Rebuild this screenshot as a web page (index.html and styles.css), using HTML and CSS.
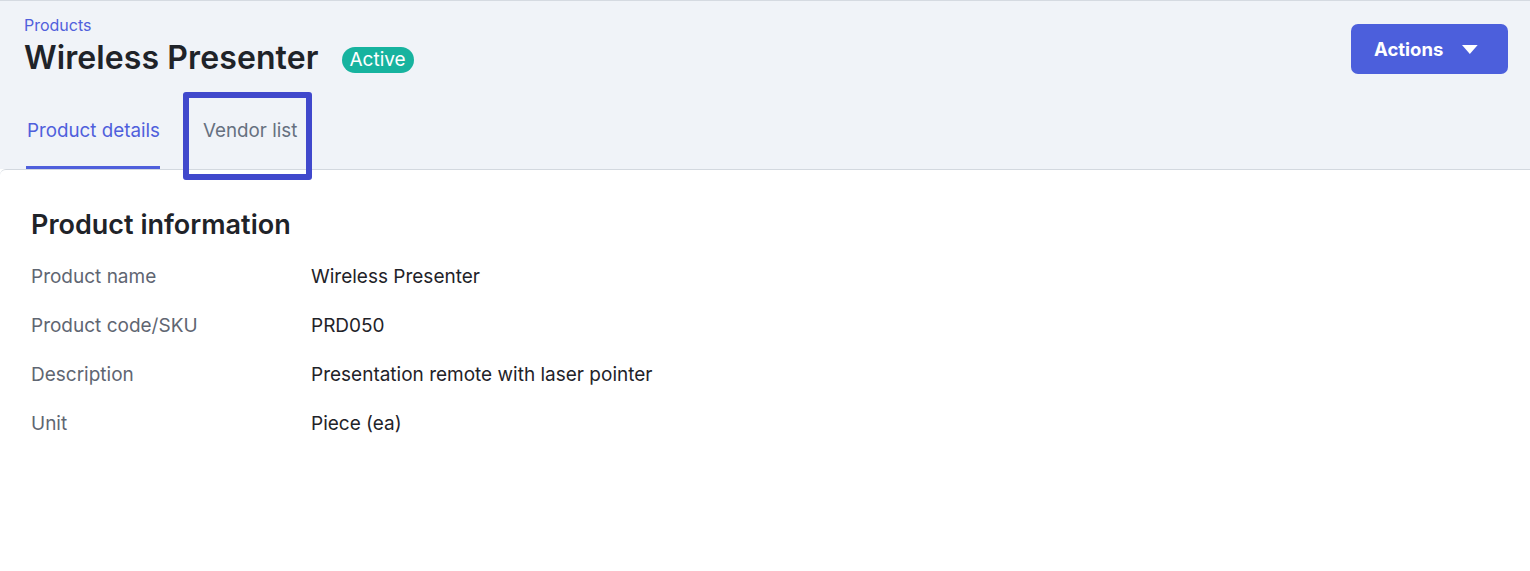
FILE: index.html
```html
<!DOCTYPE html>
<html lang="en">
<head>
<meta charset="utf-8">
<title>Wireless Presenter</title>
<link rel="stylesheet" href="styles.css">
</head>
<body>
<header class="header">
  <div class="header-top">
    <div class="title-block">
      <a class="crumb">Products</a>
      <div class="title-row">
        <h1 class="title">Wireless Presenter</h1>
        <span class="badge">Active</span>
      </div>
    </div>
    <button class="actions">
      <span>Actions</span>
      <svg class="caret" width="16" height="9" viewBox="0 0 16 9"><path d="M0 0 H16 L8 9 Z" fill="#fff"/></svg>
    </button>
  </div>
  <nav class="tabs">
    <div class="tab tab-active">Product details</div>
    <div class="tab">Vendor list<span class="highlight"></span></div>
  </nav>
</header>
<main class="panel">
  <h2 class="section-title">Product information</h2>
  <dl class="info">
    <dt>Product name</dt><dd>Wireless Presenter</dd>
    <dt>Product code/SKU</dt><dd>PRD050</dd>
    <dt>Description</dt><dd>Presentation remote with laser pointer</dd>
    <dt>Unit</dt><dd>Piece (ea)</dd>
  </dl>
</main>
</body>
</html>
```

FILE: styles.css
```css
* { box-sizing: border-box; }
html, body { margin: 0; padding: 0; background: #ffffff; }
body {
  font-family: Inter, "Noto Sans", "Liberation Sans", sans-serif;
  color: #1f2329;
}
.header {
  background: #f0f3f8;
  border-top: 1px solid #d5dae1;
  padding: 0 22px 0 24px;
}
.header-top {
  display: flex;
  justify-content: space-between;
  align-items: flex-start;
}
.title-block { padding-top: 14px; }
.crumb {
  display: block;
  font-size: 16px;
  line-height: 20px;
  color: #5060dc;
}
.title-row {
  display: flex;
  align-items: center;
  gap: 23px;
  height: 45px;
}
.title {
  margin: 0;
  font-size: 32px;
  font-weight: 600;
  line-height: 45px;
  color: #1f2329;
  letter-spacing: 0.1px;
}
.badge {
  display: inline-flex;
  align-items: center;
  height: 26px;
  padding: 0 8px;
  margin-top: 4px;
  border-radius: 13px;
  background: #17b39f;
  color: #ffffff;
  font-size: 19px;
  font-weight: 400;
}
.actions {
  margin-top: 23px;
  display: flex;
  align-items: center;
  gap: 19px;
  height: 50px;
  width: 157px;
  padding: 0 30px 0 23px;
  border: none;
  border-radius: 7px;
  background: #4c5fdc;
  color: #ffffff;
  font-family: inherit;
  font-size: 18.5px;
  font-weight: 700;
}
.caret { display: block; margin-top: 1px; }
.tabs {
  display: flex;
  gap: 43px;
  padding-left: 2px;
}
.tab {
  position: relative;
  padding: 39px 0 23px;
  font-size: 18.8px;
  line-height: 24px;
  color: #667080;
  border-bottom: 3px solid transparent;
}
.tab-active {
  color: #4f5fdc;
  border-bottom-color: #4f5fdc;
  padding-left: 1px;
}
.highlight {
  position: absolute;
  left: -20px;
  right: -15px;
  top: 12px;
  bottom: -14px;
  border: 6px solid #4048cc;
  border-radius: 3px;
  z-index: 2;
}
.panel {
  position: relative;
  background: #ffffff;
  border-top: 1px solid #d3d8df;
  border-top-left-radius: 6px;
  padding: 0 30px 40px 31px;
}
.section-title {
  margin: 0;
  padding-top: 39px;
  font-size: 27px;
  line-height: 32px;
  font-weight: 600;
  color: #1f2329;
}
.info {
  display: grid;
  grid-template-columns: 280px 1fr;
  margin: 24px 0 0;
  font-size: 19px;
  line-height: 24px;
}
.info dt, .info dd { padding-bottom: 25px; }
.info dt { color: #5f6672; }
.info dd { margin: 0; color: #1f2329; }
```
